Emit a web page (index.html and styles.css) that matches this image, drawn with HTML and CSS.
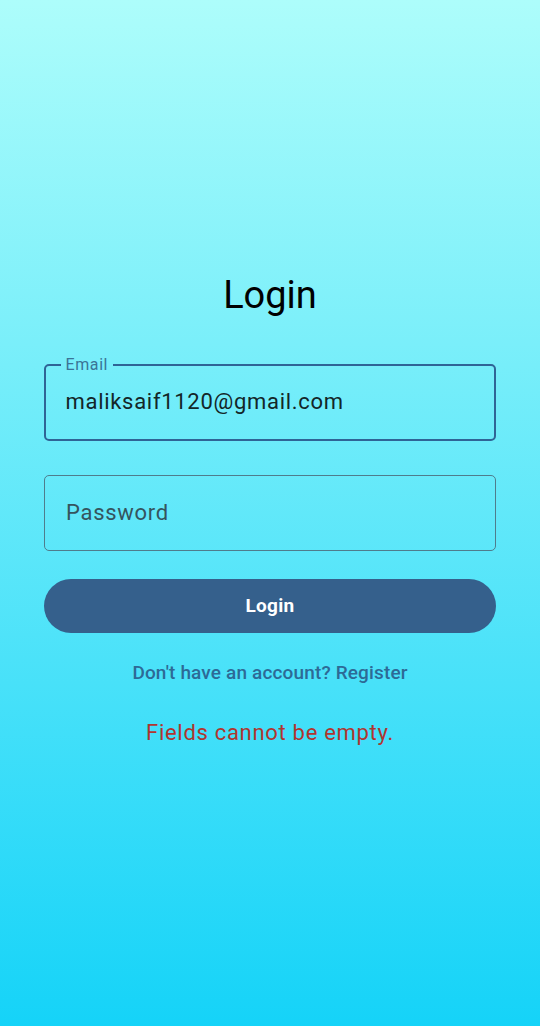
FILE: index.html
```html
<!DOCTYPE html>
<html lang="en">
<head>
<meta charset="utf-8">
<title>Login</title>
<link rel="stylesheet" href="styles.css">
</head>
<body>
<main class="screen">
  <h1 class="title">Login</h1>
  <fieldset class="field-outlined">
    <legend class="field-label">Email</legend>
    <div class="field-value">maliksaif1120@gmail.com</div>
  </fieldset>
  <div class="field-plain">
    <span class="field-placeholder">Password</span>
  </div>
  <button class="btn-login" type="button">Login</button>
  <a class="link-register" href="#">Don't have an account? Register</a>
  <p class="error">Fields cannot be empty.</p>
</main>
</body>
</html>
```

FILE: styles.css
```css
* { box-sizing: border-box; }
html, body { margin: 0; padding: 0; height: 100%; }
body {
  background: linear-gradient(180deg, #adfdfb 0%, #15d3f8 100%);
  font-family: Roboto, "Noto Sans", Arial, sans-serif;
  color: #111;
}
.screen {
  display: flex;
  flex-direction: column;
  align-items: stretch;
  padding: 273px 44px 0;
}
.title {
  margin: 0;
  font-size: 38px;
  line-height: 44px;
  font-weight: 400;
  text-align: center;
  color: #000;
}
.field-outlined {
  display: block;
  margin: 40px 0 0;
  min-width: 0;
  border: 2.5px solid #2f6496;
  border-radius: 5px;
  padding: 16px 0 23.5px 0;
}
.field-label {
  margin-left: 14.5px;
  padding: 0 5px;
  font-size: 16px;
  line-height: 16px;
  letter-spacing: 0.6px;
  color: #3a7496;
}
.field-value {
  margin-left: 19.5px;
  font-size: 22px;
  line-height: 26px;
  letter-spacing: 0.7px;
  color: #132628;
}
.field-plain {
  margin-top: 34px;
  height: 76px;
  border: 1px solid #4f7c8c;
  border-radius: 5px;
  display: flex;
  align-items: center;
  padding-left: 21px;
}
.field-placeholder {
  font-size: 22px;
  letter-spacing: 0.7px;
  color: #35545e;
}
.btn-login {
  margin-top: 28px;
  height: 54px;
  border: none;
  border-radius: 27px;
  background: #35608c;
  color: #fff;
  font-family: Roboto, "Noto Sans", Arial, sans-serif;
  font-size: 19px;
  letter-spacing: 0.3px;
  font-weight: 700;
}
.link-register {
  margin-top: 29px;
  align-self: center;
  font-size: 19px;
  line-height: 22px;
  letter-spacing: 0.15px;
  font-weight: 500;
  color: #2d6a96;
  text-decoration: none;
}
.error {
  margin: 36px 0 0;
  text-align: center;
  font-size: 22px;
  line-height: 26px;
  letter-spacing: 0.7px;
  color: #b0352f;
}
```
